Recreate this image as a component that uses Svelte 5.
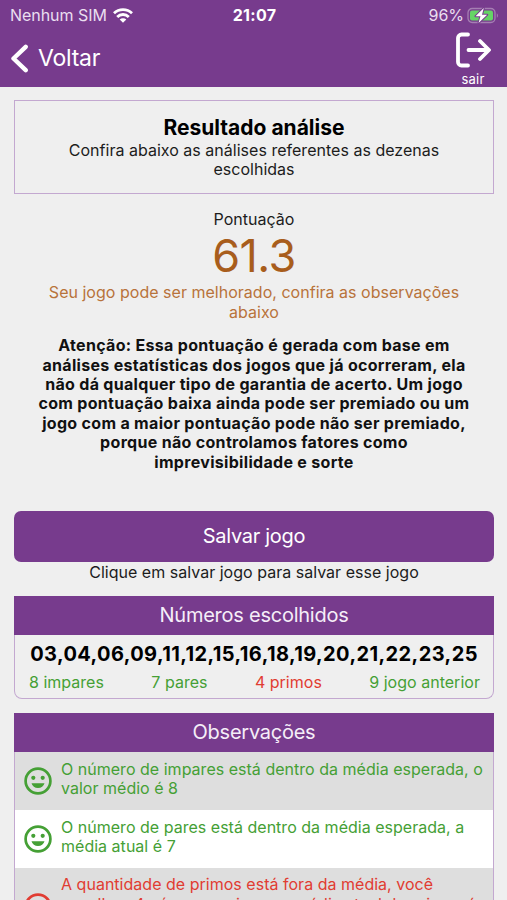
<script>
  const numbers = "03,04,06,09,11,12,15,16,18,19,20,21,22,23,25";

  const stats = [
    { text: "8 impares", ok: true },
    { text: "7 pares", ok: true },
    { text: "4 primos", ok: false },
    { text: "9 jogo anterior", ok: true },
  ];

  const notes = [
    { text: "O número de impares está dentro da média esperada, o valor médio é 8", ok: true },
    { text: "O número de pares está dentro da média esperada, a média atual é 7", ok: true },
    {
      text: "A quantidade de primos está fora da média, você escolheu 4 números primos, a média atual de primos é 5",
      ok: false,
    },
  ];
</script>

<div class="screen">
  <header>
    <div class="status">
      <div class="carrier">
        <span>Nenhum SIM</span>
        <svg width="20" height="15" viewBox="0 0 20 15" fill="none" stroke="#fff" stroke-width="2.8">
          <path d="M1 5.2a13 13 0 0 1 18 0" />
          <path d="M4.200 8.900a8.200 8.200 0 0 1 11.600 0" />
          <path d="M10 14.800 6.700 11.600a4.700 4.700 0 0 1 6.600 0z" fill="#fff" stroke="none" />
        </svg>
      </div>
      <strong>21:07</strong>
      <div class="battery">
        <span>96%</span>
        <svg width="32" height="17" viewBox="0 0 32 17">
          <rect x="1" y="1.500" width="27" height="14" rx="4.200" fill="none" stroke="#a57eb3" stroke-width="1.300" />
          <rect x="3" y="3.500" width="23" height="10" rx="2" fill="#65d466" />
          <path d="M29.800 6.200v4.600c1.500-.7 1.500-3.900 0-4.600z" fill="#a57eb3" />
          <path d="M16.800 1 8.500 9.300h5l-2 6.700 8.700-8.300h-5.200z" fill="#fff" stroke="#773b8d" stroke-width="2" paint-order="stroke" stroke-linejoin="round" />
        </svg>
      </div>
    </div>

    <nav>
      <button class="back">
        <svg width="19" height="30" viewBox="0 0 19 30" fill="none" stroke="#fff" stroke-width="4.400" stroke-linecap="round" stroke-linejoin="round">
          <path d="M15.700 2.800 3.500 14.500l12.200 11.700" />
        </svg>
        <span>Voltar</span>
      </button>
      <button class="logout">
        <svg width="36" height="36" viewBox="0 0 36 36" fill="none" stroke="#fff" stroke-width="3.800" stroke-linecap="round" stroke-linejoin="round">
          <path d="M13 2.500H6.500a3.500 3.500 0 0 0-3.500 3.500v24a3.500 3.500 0 0 0 3.500 3.500H13" />
          <path d="M13.500 18h20M25 9l9 9-9 9" />
        </svg>
        <span>sair</span>
      </button>
    </nav>
  </header>

  <main>
    <section class="intro">
      <h1>Resultado análise</h1>
      <p>Confira abaixo as análises referentes as dezenas escolhidas</p>
    </section>

    <section class="score">
      <p>Pontuação</p>
      <div class="value">61.3</div>
      <p class="hint">Seu jogo pode ser melhorado, confira as observações abaixo</p>
      <p class="warning">
        Atenção: Essa pontuação é gerada com base em análises estatísticas dos jogos que já ocorreram, ela
        não dá qualquer tipo de garantia de acerto. Um jogo com pontuação baixa ainda pode ser premiado ou um
        jogo com a maior pontuação pode não ser premiado, porque não controlamos fatores como
        imprevisibilidade e sorte
      </p>
    </section>

    <button class="save">Salvar jogo</button>
    <p class="save-hint">Clique em salvar jogo para salvar esse jogo</p>

    <section class="panel chosen">
      <h2>Números escolhidos</h2>
      <div class="numbers">{numbers}</div>
      <div class="stats">
        {#each stats as s}
          <span class:ok={s.ok} class:bad={!s.ok}>{s.text}</span>
        {/each}
      </div>
    </section>

    <section class="panel">
      <h2>Observações</h2>
      {#each notes as n}
        <div class="note" class:ok={n.ok} class:bad={!n.ok}>
          <svg width="28" height="28" viewBox="0 0 28 28">
            <circle cx="14" cy="14" r="12.400" fill="none" stroke="currentColor" stroke-width="2.700" />
            <circle cx="9.300" cy="10.800" r="2.100" fill="currentColor" />
            <circle cx="18.700" cy="10.800" r="2.100" fill="currentColor" />
            {#if n.ok}
              <path d="M7.500 16.300h13a6.800 6.800 0 0 1-13 0z" fill="currentColor" />
            {:else}
              <path d="M7.500 21.500h13a6.800 6.800 0 0 0-13 0z" fill="currentColor" />
            {/if}
          </svg>
          <p>{n.text}</p>
        </div>
      {/each}
    </section>
  </main>
</div>

<style>
  :global(body) {
    margin: 0;
    background: #efefef;
  }

  .screen {
    height: 900px;
    overflow: hidden;
    background: #efefef;
    color: #1c1c1c;
    font-family: Inter, sans-serif;
    font-size: 16px;
    line-height: 19.4px;
    letter-spacing: 0.02px;
  }

  h1,
  h2,
  p {
    margin: 0;
  }

  button {
    border: none;
    padding: 0;
    background: none;
    color: #fff;
    font: inherit;
    letter-spacing: inherit;
  }

  header {
    height: 87px;
    background: #773b8d;
    color: #fff;
  }

  .status {
    display: grid;
    grid-template-columns: 1fr auto 1fr;
    align-items: center;
    height: 31px;
    padding: 0 8px 0 10px;
    letter-spacing: -0.05px;
  }

  .status strong {
    letter-spacing: 0.3px;
  }

  .carrier,
  .battery {
    display: flex;
    align-items: center;
    gap: 6px;
    color: #eadff0;
  }

  .battery {
    justify-content: flex-end;
    gap: 3px;
  }

  nav {
    display: flex;
    justify-content: space-between;
    padding: 1px 16px 0 10px;
  }

  .back {
    display: flex;
    align-items: center;
    gap: 9px;
    height: 53px;
    font-size: 23px;
    letter-spacing: -0.25px;
  }

  .logout {
    display: flex;
    flex-direction: column;
    align-items: center;
    font-size: 13px;
    line-height: 16px;
    gap: 3px;
    letter-spacing: 0.2px;
  }

  main {
    padding: 13px 13px 0 14px;
  }

  .intro {
    height: 92px;
    border: 1px solid #c3a8d0;
    padding: 0 20px;
    text-align: center;
  }

  h1 {
    margin-top: 14px;
    font-size: 21px;
    line-height: 26px;
    font-weight: 700;
    letter-spacing: 0;
    color: #000;
  }

  .score {
    padding: 16px 20px 0;
    text-align: center;
  }

  .value {
    font-size: 45px;
    line-height: 54px;
    letter-spacing: -0.6px;
    color: #a85d1c;
  }

  .hint {
    color: #b8733b;
  }

  .warning {
    margin-top: 14px;
    font-weight: 700;
    letter-spacing: 0.31px;
    color: #111;
  }

  .save {
    display: block;
    width: 100%;
    height: 51px;
    margin-top: 39px;
    border-radius: 7px;
    background: #773b8d;
    font-size: 20px;
    letter-spacing: -0.3px;
  }

  .save-hint {
    margin-top: 1px;
    text-align: center;
  }

  .panel {
    margin-top: 14px;
    border: 1px solid #c3a8d0;
    border-top: none;
  }

  .chosen {
    height: 103px;
    box-sizing: border-box;
    border-radius: 0 0 8px 8px;
  }

  h2 {
    margin: 0 -1px;
    background: #773b8d;
    color: #f5eef8;
    font-size: 20px;
    line-height: 39px;
    font-weight: 400;
    letter-spacing: -0.25px;
    text-align: center;
  }

  .numbers {
    margin-top: 7px;
    text-align: center;
    font-size: 20px;
    line-height: 25px;
    font-weight: 700;
    letter-spacing: 0.4px;
    color: #000;
    white-space: nowrap;
  }

  .stats {
    display: flex;
    justify-content: space-between;
    margin-top: 6px;
    padding: 0 13px 0 14px;
  }

  .ok {
    color: #45a035;
  }

  .bad {
    color: #e13c32;
  }

  .note {
    display: flex;
    align-items: center;
    gap: 9px;
    min-height: 58px;
    box-sizing: border-box;
    padding: 0 4px 0 9px;
    background: #fff;
  }

  .note:nth-child(even) {
    background: #dedede;
  }

  .note svg {
    flex: none;
  }

  .note p {
    padding: 7px 0 12px;
  }
</style>
